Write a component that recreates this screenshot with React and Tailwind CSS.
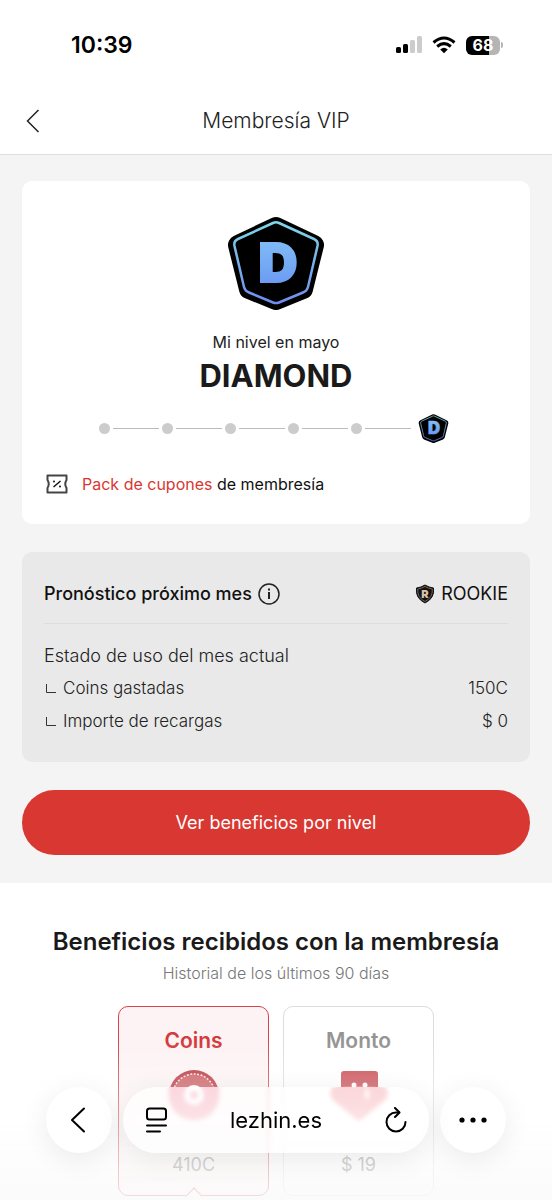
import React from 'react';

const LEVEL_DOTS = [1, 2, 3, 4, 5];

const DiamondBadge = ({ id, className }) => (
    <svg viewBox="0 0 98 94" className={className} aria-hidden="true">
        <defs>
            <linearGradient id={`${id}-line`} x1="0" y1="0" x2="0" y2="1">
                <stop offset="0" stopColor="#7fd6ea" />
                <stop offset="1" stopColor="#6f8df0" />
            </linearGradient>
            <linearGradient id={`${id}-letter`} x1="0" y1="0" x2="0" y2="1">
                <stop offset="0" stopColor="#86c3f6" />
                <stop offset="1" stopColor="#6693f2" />
            </linearGradient>
        </defs>
        <path d="M49 11 87 29 76 73 49 84 22 73 11 29Z" fill="#000" stroke="#000" strokeWidth="20" strokeLinejoin="round" />
        <path
            d="M46 7Q49 5.600 52 7L87 23Q91.500 25 90.500 30L81 71Q80 75 76 76.500L52 86.500Q49 87.700 46 86.500L22 76.500Q18 75 17 71L7.500 30Q6.500 25 11 23Z"
            fill="none"
            stroke={`url(#${id}-line)`}
            strokeWidth="2.500"
        />
        <text
            x="51"
            y="66"
            textAnchor="middle"
            fontFamily="Inter, sans-serif"
            fontWeight="900"
            fontSize="54"
            fill={`url(#${id}-letter)`}
            stroke={`url(#${id}-letter)`}
            strokeWidth="2"
        >
            D
        </text>
    </svg>
);

const RookieBadge = () => (
    <svg width="20" height="20" viewBox="0 0 20 20" aria-hidden="true">
        <path d="M10 1Q14 3.500 18.500 4Q20 14 10 19Q0 14 1.500 4Q6 3.500 10 1Z" fill="#111" stroke="#111" strokeWidth="1" strokeLinejoin="round" />
        <path d="M10 2.500Q13.500 4.500 17.300 5Q18 13.500 10 17.500Q2 13.500 2.700 5Q6.500 4.500 10 2.500Z" fill="none" stroke="#6d6762" strokeWidth="1" />
        <text x="10" y="14" textAnchor="middle" fontFamily="Inter, sans-serif" fontWeight="900" fontSize="11" fill="#dcbfa6">R</text>
    </svg>
);

const StatusBar = () => (
    <div className="flex h-[88px] items-center justify-between pt-0.5 pr-[49px] pl-[71px]">
        <span className="text-[23px] leading-7 font-semibold text-black">10:39</span>
        <div className="flex items-center">
            <svg width="28" height="20" viewBox="0 0 28 20" aria-hidden="true">
                <rect x="0" y="12" width="5" height="6" rx="1.500" fill="#000" />
                <rect x="7" y="9" width="5" height="9" rx="1.500" fill="#000" />
                <rect x="14" y="5" width="5" height="13" rx="1.500" fill="#ccc" />
                <rect x="21" y="1" width="5" height="17" rx="1.500" fill="#ccc" />
            </svg>
            <svg width="24" height="18" viewBox="0 0 24 18" className="ml-2" fill="none" stroke="#000" strokeWidth="3" aria-hidden="true">
                <path d="M1.500 6.500Q12-2.500 22.500 6.500" />
                <path d="M5.200 10.500Q12 4.800 18.800 10.500" />
                <path d="M8.200 13.400Q12 10.200 15.800 13.400L12 17.200Z" fill="#000" stroke="none" />
            </svg>
            <div className="ml-2.5 flex h-[19px] w-[34px] items-center justify-center rounded-md bg-linear-to-r from-black from-68% to-[#b5b5b5] to-68%">
                <span className="text-base leading-5 font-bold text-white">68</span>
            </div>
            <span className="ml-px h-1.5 w-0.5 rounded-r-full bg-[#b5b5b5]" />
        </div>
    </div>
);

const LevelCard = () => (
    <section className="flex flex-col items-center rounded-[10px] bg-white pt-[35px] pb-[26px]">
        <DiamondBadge id="level" className="h-[94px] w-[98px]" />
        <p className="mt-5 text-base leading-6 text-[#222]">Mi nivel en mayo</p>
        <h2 className="mt-1 text-[31px] leading-9 font-bold text-[#1a1a1a]">DIAMOND</h2>
        <div className="mt-[19px] flex h-[30px] items-center pr-1">
            {LEVEL_DOTS.map((dot) => (
                <div key={dot} className="flex items-center">
                    <span className="size-[11px] rounded-full bg-[#ccc]" />
                    <span className="mx-[3px] h-px w-[46px] bg-[#bbb]" />
                </div>
            ))}
            <DiamondBadge id="step" className="ml-1 h-[29px] w-[31px]" />
        </div>
        <a href="#cupones" className="mt-[27px] flex items-center gap-[14px] self-start pl-6 text-base leading-7 text-[#111]">
            <svg width="22" height="20" viewBox="0 0 22 20" fill="none" stroke="#444" strokeWidth="2" strokeLinejoin="round" aria-hidden="true">
                <path d="M1.500 1.500H20.500V6Q18 10 20.500 14V18.500H1.500V14Q4 10 1.500 6Z" />
                <path d="M14.500 7 7.500 13" strokeWidth="1.500" stroke="#111" />
                <circle cx="8" cy="7.500" r="1" fill="#111" stroke="none" />
                <circle cx="14" cy="12.500" r="1" fill="#111" stroke="none" />
            </svg>
            <span><span className="text-[#d83831]">Pack de cupones</span> de membresía</span>
        </a>
    </section>
);

const UsageRow = ({ label, value }) => (
    <div className="flex h-[33px] items-center justify-between text-[17px] font-light">
        <dt className="flex items-center gap-[7px]">
            <svg width="12" height="10" viewBox="0 0 12 10" fill="none" stroke="#333" aria-hidden="true">
                <path d="M2.500 0V8.500H12" />
            </svg>
            {label}
        </dt>
        <dd>{value}</dd>
    </div>
);

const ForecastCard = () => (
    <section className="mt-7 rounded-[10px] bg-[#e9e9e9] px-[22px] pt-6 pb-6 text-[#222]">
        <div className="flex items-center justify-between border-b border-[#dedede] pb-[11px] text-lg leading-9 text-[#111]">
            <h3 className="flex items-center gap-1.5 font-medium">
                Pronóstico próximo mes
                <button type="button" aria-label="Información">
                    <svg width="22" height="22" viewBox="0 0 22 22" fill="none" stroke="#222" strokeWidth="1.500" aria-hidden="true">
                        <circle cx="11" cy="11" r="10" />
                        <path d="M11 9V16M11 5.500V7.500" strokeWidth="2" />
                    </svg>
                </button>
            </h3>
            <span className="flex items-center gap-1.5">
                <RookieBadge />
                ROOKIE
            </span>
        </div>
        <p className="pt-4 text-lg leading-8 font-light">Estado de uso del mes actual</p>
        <dl>
            <UsageRow label="Coins gastadas" value="150C" />
            <UsageRow label="Importe de recargas" value="$ 0" />
        </dl>
    </section>
);

const CoinIcon = () => (
    <svg width="52" height="52" viewBox="0 0 52 52" aria-hidden="true">
        <circle cx="26" cy="26" r="25" fill="#b9343c" />
        <circle cx="26" cy="26" r="21" fill="#cd5a60" stroke="#fbe6e7" strokeWidth="1.500" strokeDasharray="2 1.500" />
        <path d="M1 18H51Q53 36 41 46Q26 56 11 46Q-1 36 1 18Z" fill="#f0708a" />
        <circle cx="26" cy="26" r="7" fill="none" stroke="#fff" strokeWidth="6" />
    </svg>
);

const GemIcon = () => (
    <svg width="60" height="52" viewBox="0 0 60 52" aria-hidden="true">
        <path d="M12 20V5Q12 2 15 2H46Q49 2 49 5V20Z" fill="#c94a52" />
        <path d="M3 19Q30 15 57 19Q61 25 56 31L33 50Q30 53 27 50L4 31Q-1 25 3 19Z" fill="#f0707a" />
        <circle cx="25" cy="16" r="2.500" fill="#fff" />
        <circle cx="36" cy="16" r="2.500" fill="#fff" />
        <ellipse cx="38" cy="25" rx="2" ry="5" fill="#fff" />
    </svg>
);

const BenefitsSection = () => (
    <section className="bg-white pt-[41px] text-center">
        <h2 className="text-2xl leading-9 font-semibold text-[#1a1a1a]">Beneficios recibidos con la membresía</h2>
        <p className="mt-px text-base leading-6 font-light text-[#777]">Historial de los últimos 90 días</p>
        <div className="mt-[21px] flex justify-center gap-[14px]">
            <button type="button" className="relative flex h-[190px] w-[151px] flex-col items-center rounded-[10px] border border-[#d8434a] bg-[#fdf3f4] pt-5 pb-4">
                <span className="text-[21px] leading-7 font-semibold text-[#d33a3c]">Coins</span>
                <span className="mt-[14px]"><CoinIcon /></span>
                <span className="mt-auto text-lg leading-7 text-[#777]">410C</span>
                <span className="absolute -bottom-[7px] size-3 rotate-45 border-t border-l border-[#d8434a] bg-white" />
            </button>
            <button type="button" className="flex h-[190px] w-[151px] flex-col items-center rounded-[10px] border border-[#ddd] bg-white pt-5 pb-4">
                <span className="text-[21px] leading-7 font-semibold text-[#949494]">Monto</span>
                <span className="mt-[14px]"><GemIcon /></span>
                <span className="mt-auto text-lg leading-7 text-[#777]">$ 19</span>
            </button>
        </div>
    </section>
);

const BrowserBar = () => (
    <div className="fixed inset-x-0 bottom-0 h-[160px]">
        {/* fade over the page content */}
        <div className="absolute inset-0 bg-linear-to-b from-white/0 via-white/50 to-[#fafafa]/85" />
        <div className="relative flex gap-[11px] px-[46px] pt-[47px]">
            <button type="button" aria-label="Atrás" className="flex size-[66px] items-center justify-center rounded-full bg-white shadow-[0_6px_28px_rgba(0,0,0,0.08)]">
                <svg width="18" height="26" viewBox="0 0 18 26" fill="none" stroke="#000" strokeWidth="2" strokeLinecap="round" strokeLinejoin="round" aria-hidden="true">
                    <path d="M14 1.500 2 13 14 24.500" />
                </svg>
            </button>
            <div className="flex h-[66px] flex-1 items-center justify-between rounded-full bg-white/60 pr-[21px] pl-[22px] shadow-[0_6px_28px_rgba(0,0,0,0.08)] backdrop-blur-[2px]">
                <button type="button" aria-label="Menú de página">
                    <svg width="23" height="26" viewBox="0 0 23 26" fill="none" stroke="#000" strokeWidth="2" strokeLinecap="round" aria-hidden="true">
                        <rect x="2" y="1.500" width="19" height="11" rx="2.500" />
                        <path d="M2 18.500H21M2 24.500H15" />
                    </svg>
                </button>
                <span className="text-[22px] leading-7 text-black">lezhin.es</span>
                <button type="button" aria-label="Recargar">
                    <svg width="24" height="26" viewBox="0 0 24 26" fill="none" stroke="#000" strokeWidth="2" strokeLinecap="round" strokeLinejoin="round" aria-hidden="true">
                        <path d="M15 5.500H12A9.500 9.500 0 1 0 21.500 15" />
                        <path d="M11 1 15.500 5.500 11 10" />
                    </svg>
                </button>
            </div>
            <button type="button" aria-label="Más opciones" className="flex size-[66px] items-center justify-center rounded-full bg-white shadow-[0_6px_28px_rgba(0,0,0,0.08)]">
                <svg width="28" height="6" viewBox="0 0 28 6" fill="#000" aria-hidden="true">
                    <circle cx="3" cy="3" r="2.600" />
                    <circle cx="14" cy="3" r="2.600" />
                    <circle cx="25" cy="3" r="2.600" />
                </svg>
            </button>
        </div>
    </div>
);

const App = () => (
    <div className="min-h-screen bg-white font-[Inter,sans-serif]">
        <StatusBar />
        <header className="grid h-[67px] grid-cols-[64px_1fr_64px] items-center border-b border-[#ddd]">
            <button type="button" aria-label="Volver" className="pl-[26px]">
                <svg width="14" height="24" viewBox="0 0 14 24" fill="none" stroke="#222" strokeWidth="1.500" aria-hidden="true">
                    <path d="M12.500 1 1.500 12 12.500 23" />
                </svg>
            </button>
            <h1 className="text-center text-[21px] leading-7 font-light text-[#222]">Membresía VIP</h1>
        </header>
        <main>
            <div className="bg-[#f4f4f4] px-[22px] pt-[26px] pb-7">
                <LevelCard />
                <ForecastCard />
                <button type="button" className="mt-7 h-[65px] w-full rounded-full bg-[#d83831] text-lg text-white">
                    Ver beneficios por nivel
                </button>
            </div>
            <BenefitsSection />
        </main>
        <BrowserBar />
    </div>
);

export default App;
